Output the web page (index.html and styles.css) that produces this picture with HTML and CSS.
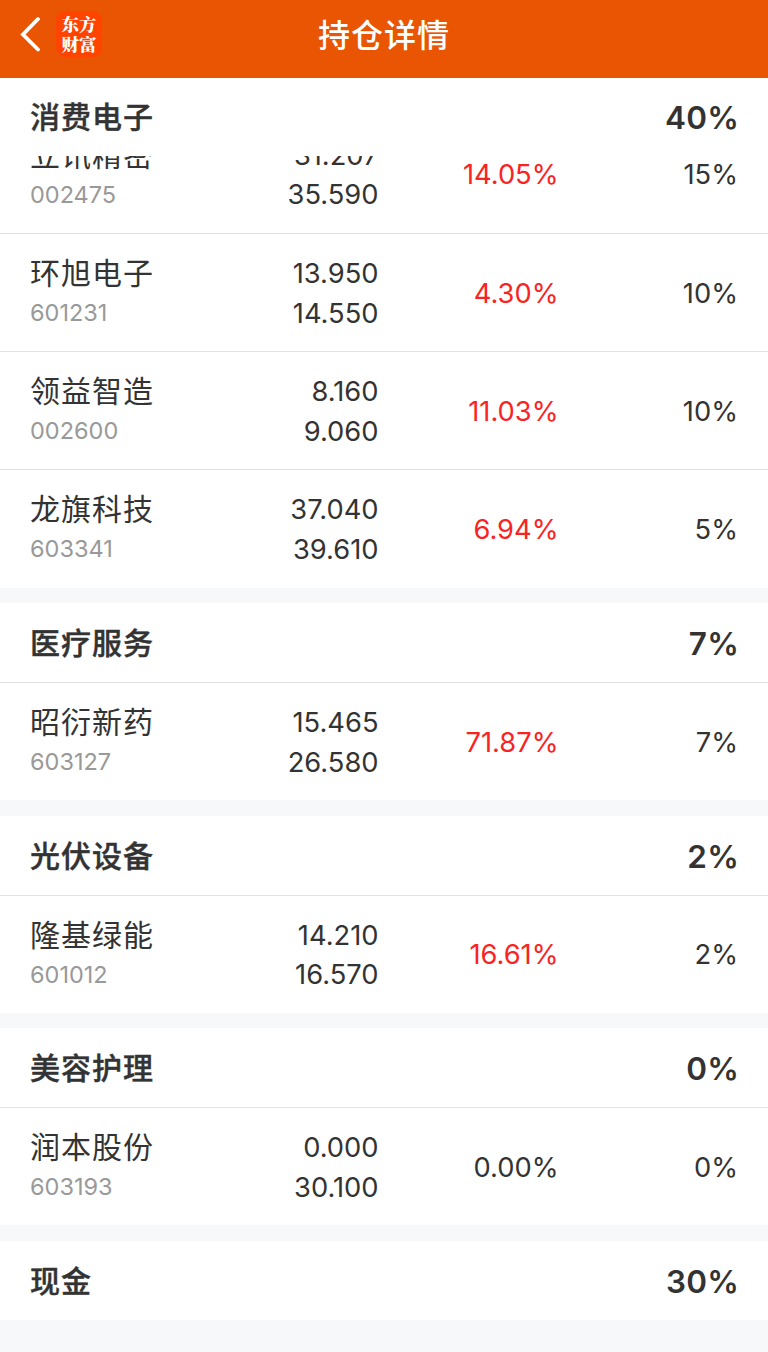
FILE: index.html
```html
<!DOCTYPE html>
<html lang="zh-CN">
<head>
<meta charset="utf-8">
<title>持仓详情</title>
<link rel="stylesheet" href="styles.css">
</head>
<body>
<header class="bar">
<svg class="back" viewBox="0 0 22 36"><path d="M18 3 3 18.500l15 15"/></svg>
<div class="logo"><span>东方</span><span>财富</span></div>
<h1 class="title">持仓详情</h1>
</header>
<main>
<section class="group first">
<div class="head"><h2>消费电子</h2><b>40%</b></div>
<div class="clip"><div class="row"><div class="stock"><p>立讯精密</p><small>002475</small></div><div class="price"><p>31.207</p><p>35.590</p></div><div class="gain">14.05%</div><div class="share">15%</div></div></div>
<div class="row"><div class="stock"><p>环旭电子</p><small>601231</small></div><div class="price"><p>13.950</p><p>14.550</p></div><div class="gain">4.30%</div><div class="share">10%</div></div>
<div class="row"><div class="stock"><p>领益智造</p><small>002600</small></div><div class="price"><p>8.160</p><p>9.060</p></div><div class="gain">11.03%</div><div class="share">10%</div></div>
<div class="row"><div class="stock"><p>龙旗科技</p><small>603341</small></div><div class="price"><p>37.040</p><p>39.610</p></div><div class="gain">6.94%</div><div class="share">5%</div></div>
</section>
<section class="group">
<div class="head"><h2>医疗服务</h2><b>7%</b></div>
<div class="row"><div class="stock"><p>昭衍新药</p><small>603127</small></div><div class="price"><p>15.465</p><p>26.580</p></div><div class="gain">71.87%</div><div class="share">7%</div></div>
</section>
<section class="group">
<div class="head"><h2>光伏设备</h2><b>2%</b></div>
<div class="row"><div class="stock"><p>隆基绿能</p><small>601012</small></div><div class="price"><p>14.210</p><p>16.570</p></div><div class="gain">16.61%</div><div class="share">2%</div></div>
</section>
<section class="group">
<div class="head"><h2>美容护理</h2><b>0%</b></div>
<div class="row"><div class="stock"><p>润本股份</p><small>603193</small></div><div class="price"><p>0.000</p><p>30.100</p></div><div class="gain flat">0.00%</div><div class="share">0%</div></div>
</section>
<section class="group">
<div class="head"><h2>现金</h2><b>30%</b></div>
</section>
</main>
</body>
</html>
```
FILE: styles.css
```css
* { box-sizing: border-box; margin: 0; padding: 0; }
body { width: 768px; height: 1352px; overflow: hidden; background: #f6f8fa; color: #333; font-family: Inter, "Noto Sans CJK SC", sans-serif; }
.bar { height: 77.5px; background: #ea5504; display: grid; grid-template-columns: 22px 46px 1fr 102px; column-gap: 14px; padding: 10px 0 20px 20px; align-items: center; color: #fff; }
.back { width: 22px; height: 36px; fill: none; stroke: #fff; stroke-width: 3.8; stroke-linecap: round; }
.logo { width: 46px; height: 46px; border-radius: 9px; background: #ff4400; display: flex; flex-direction: column; justify-content: center; align-items: center; font: 900 17.5px/20px "Noto Serif CJK SC", "Noto Sans CJK SC", serif; }
.title { font-size: 32px; font-weight: 500; line-height: 44px; padding-top: 4px; text-align: center; letter-spacing: 1px; }
.group { background: #fff; margin-bottom: 15.4px; }
.head { height: 79px; padding: 0 29px 0 30px; display: flex; align-items: center; justify-content: space-between; }
.first .head { height: 78.5px; }
.head h2 { font-size: 30px; font-weight: 500; letter-spacing: 1px; padding-bottom: 3px; -webkit-text-stroke: .4px #333; }
.head b { font-size: 31.5px; font-weight: 600; letter-spacing: .2px; padding-top: 2px; }
.clip { height: 77px; overflow: hidden; display: flex; align-items: flex-end; }
.row { flex: none; width: 768px; height: 118.2px; border-top: 1px solid #e0e2e3; padding: 1px 30px 0; display: grid; grid-template-columns: 170px 178.5px 180px 179.5px; align-items: center; font-size: 27.3px; }
.stock p { font-size: 30px; line-height: 39px; letter-spacing: 1px; }
.stock small { display: block; font-size: 23.5px; line-height: 39px; color: #999; }
.price, .gain, .share { text-align: right; }
.price { padding-top: 1px; }
.price p { line-height: 39.5px; }
.gain { color: #fa2323; }
.flat { color: #333; }
```
